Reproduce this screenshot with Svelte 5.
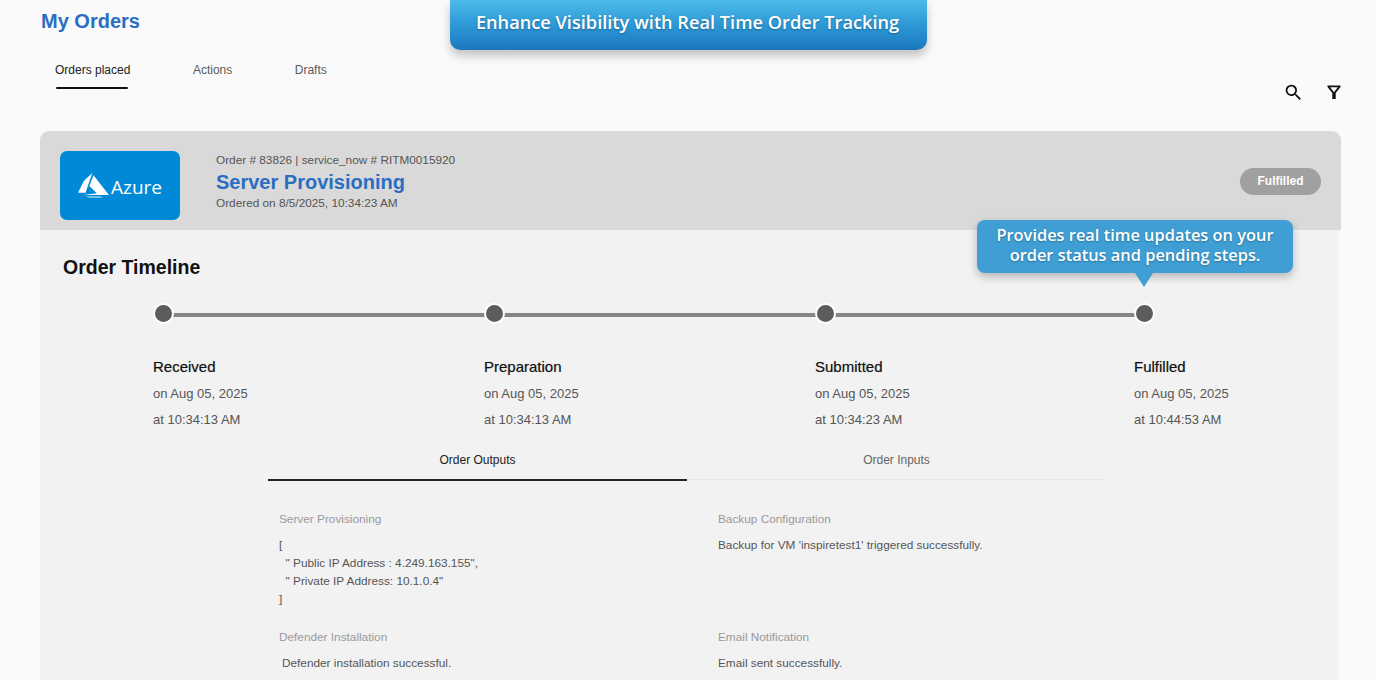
<script>
  const tabs = [
    { label: 'Orders placed', active: true },
    { label: 'Actions', active: false },
    { label: 'Drafts', active: false }
  ];

  const steps = [
    { name: 'Received', date: 'on Aug 05, 2025', time: 'at 10:34:13 AM' },
    { name: 'Preparation', date: 'on Aug 05, 2025', time: 'at 10:34:13 AM' },
    { name: 'Submitted', date: 'on Aug 05, 2025', time: 'at 10:34:23 AM' },
    { name: 'Fulfilled', date: 'on Aug 05, 2025', time: 'at 10:44:53 AM' }
  ];
</script>

<div class="page">
  <div class="banner">Enhance Visibility with Real Time Order Tracking</div>

  <h1>My Orders</h1>

  <div class="toolbar">
    <nav class="tabs">
      {#each tabs as tab}
        <span class="tab" class:active={tab.active}>{tab.label}</span>
      {/each}
    </nav>
    <div class="tools">
      <svg class="search" viewBox="0 0 24 24" aria-hidden="true">
        <path d="M15.5 14h-.79l-.28-.27A6.47 6.47 0 0 0 16 9.5 6.5 6.5 0 1 0 9.5 16c1.61 0 3.09-.59 4.23-1.57l.27.28v.79l5 4.99L20.49 19l-4.99-5zm-6 0C7.01 14 5 11.99 5 9.5S7.01 5 9.5 5 14 7.01 14 9.5 11.99 14 9.5 14z" />
      </svg>
      <svg class="filter" viewBox="0 0 24 24" aria-hidden="true">
        <path d="M5.500 5.500h13V7L13.700 13v6h-3.400v-6L5.500 7V5.500zM8.200 7.200l3.400 4.600h.8l3.400-4.600H8.200z" fill-rule="evenodd" />
      </svg>
    </div>
  </div>

  <section class="card">
    <header class="card-head">
      <div class="logo">
        <svg viewBox="0 0 30 25" aria-hidden="true">
          <path d="M13.800 0 5.800 7.500 0 19h7.300L13.800 0z" />
          <path d="M15 2 11 12.500l7.200 7L5.500 21.200H30L15 2z" />
          <path d="M7 22.400h15l2 1.400H11z" opacity="0.6" />
        </svg>
        <span>Azure</span>
      </div>
      <div class="head-text">
        <div class="meta">Order # 83826 | service_now # RITM0015920</div>
        <div class="title">Server Provisioning</div>
        <div class="meta">Ordered on 8/5/2025, 10:34:23 AM</div>
      </div>
      <span class="status">Fulfilled</span>
    </header>

    <div class="card-body">
      <div class="callout">Provides real time updates on your<br />order status and pending steps.</div>

      <h2>Order Timeline</h2>

      <div class="timeline">
        {#each steps as step}
          <div class="step">
            <div class="track"><span class="dot"></span></div>
            <div class="step-name">{step.name}</div>
            <div class="step-line">{step.date}</div>
            <div class="step-line">{step.time}</div>
          </div>
        {/each}
      </div>

      <div class="detail">
        <div class="detail-tabs">
          <span class="detail-tab active">Order Outputs</span>
          <span class="detail-tab">Order Inputs</span>
        </div>
        <div class="outputs">
          <div class="output first">
            <div class="output-label">Server Provisioning</div>
            <pre class="output-value">[
  " Public IP Address : 4.249.163.155",
  " Private IP Address: 10.1.0.4"
]</pre>
          </div>
          <div class="output first">
            <div class="output-label">Backup Configuration</div>
            <div class="output-value">Backup for VM 'inspiretest1' triggered successfully.</div>
          </div>
          <div class="output">
            <div class="output-label">Defender Installation</div>
            <div class="output-value indent">Defender installation successful.</div>
          </div>
          <div class="output">
            <div class="output-label">Email Notification</div>
            <div class="output-value">Email sent successfully.</div>
          </div>
        </div>
      </div>
    </div>
  </section>
</div>

<style>
  :global(body) {
    margin: 0;
    background: #fafafa;
    overflow: hidden;
  }

  .page {
    position: relative;
    height: 680px;
    overflow: hidden;
    box-sizing: border-box;
    padding: 10px 35px 0 40px;
    font-family: "Liberation Sans", Arial, sans-serif;
    color: #555;
  }

  .banner {
    position: absolute;
    top: 0;
    left: 450px;
    width: 477px;
    height: 50px;
    box-sizing: border-box;
    padding: 10px 2px 0 0;
    border-radius: 0 0 10px 10px;
    background: linear-gradient(180deg, #4bbbe8 0%, #2d98d6 50%, #1b78bf 100%);
    box-shadow: 0 6px 10px rgba(0, 0, 0, 0.22);
    color: #fff;
    font-family: "Open Sans", sans-serif;
    font-size: 18.200px;
    font-weight: 600;
    line-height: 25px;
    text-align: center;
    text-shadow: 0 1px 2px rgba(0, 0, 0, 0.3);
    white-space: nowrap;
  }

  h1 {
    margin: 0 0 0 1px;
    color: #2a6ec2;
    font-size: 20px;
    font-weight: 700;
    line-height: 23px;
  }

  .toolbar {
    display: flex;
    justify-content: space-between;
    height: 98px;
  }

  .tabs {
    display: flex;
    gap: 62.500px;
    padding: 30px 0 0 15px;
  }

  .tab {
    position: relative;
    height: 15px;
    color: #5a5a5a;
    font-size: 12px;
    line-height: 15px;
  }

  .tab.active {
    color: #222;
  }

  .tab.active::after {
    content: "";
    position: absolute;
    left: 1px;
    right: 2px;
    top: 24px;
    height: 2px;
    border-radius: 2px;
    background: #111;
  }

  .tools {
    display: flex;
    gap: 18px;
    margin-right: -5px;
    padding-top: 47px;
  }

  .tools svg {
    fill: #111;
  }

  .search {
    width: 21px;
    height: 21px;
    margin-top: 2px;
  }

  .filter {
    width: 24px;
    height: 24px;
  }

  .card-head {
    display: flex;
    align-items: center;
    height: 99px;
    box-sizing: border-box;
    padding: 0 20px;
    border-radius: 9px 9px 0 0;
    background: #d9d9d9;
  }

  .logo {
    display: flex;
    align-items: center;
    justify-content: center;
    gap: 2px;
    width: 120px;
    height: 69px;
    margin-top: 10px;
    border-radius: 7px;
    background: #0089d6;
    color: #fff;
    font-family: "Open Sans", sans-serif;
    font-size: 19px;
  }

  .logo svg {
    width: 31px;
    height: 26px;
    fill: #fff;
  }

  .logo span {
    padding-top: 2px;
  }

  .head-text {
    flex: 1;
    margin: 2px 0 0 36px;
  }

  .meta {
    font-size: 11.800px;
    line-height: 14px;
  }

  .title {
    margin: 4px 0 2px;
    color: #2a6ec2;
    font-size: 20px;
    font-weight: 700;
    line-height: 23px;
  }

  .status {
    width: 81px;
    height: 27px;
    margin-top: 2px;
    border-radius: 14px;
    background: #a0a0a0;
    color: #fff;
    font-size: 12px;
    font-weight: 700;
    line-height: 27px;
    text-align: center;
  }

  .card-body {
    position: relative;
    height: 460px;
    margin-right: 2px;
    box-sizing: border-box;
    padding: 26px 0 0 23px;
    background: #f2f2f2;
  }

  .callout {
    position: absolute;
    top: -10px;
    left: 937px;
    width: 316px;
    height: 53px;
    box-sizing: border-box;
    padding-top: 5px;
    border-radius: 8px;
    background: #3f9fd4;
    box-shadow: 0 4px 8px rgba(0, 0, 0, 0.25);
    color: #fff;
    font-family: "Open Sans", sans-serif;
    font-size: 16.400px;
    font-weight: 600;
    line-height: 20px;
    text-align: center;
    text-shadow: 0 1px 2px rgba(0, 0, 0, 0.3);
    white-space: nowrap;
  }

  .callout::after {
    content: "";
    position: absolute;
    left: 158px;
    top: 53px;
    border-left: 9px solid transparent;
    border-right: 9px solid transparent;
    border-top: 14px solid #3f9fd4;
  }

  h2 {
    margin: 0;
    color: #111;
    font-size: 19.500px;
    font-weight: 700;
    line-height: 23px;
  }

  .timeline {
    display: flex;
    margin: 23px 0 0 90px;
  }

  .step {
    flex: 0 0 331px;
    font-size: 13px;
  }

  .step:nth-child(3) {
    flex-basis: 319px;
  }

  .track {
    position: relative;
    height: 22px;
    margin-bottom: 34px;
  }

  .track::after {
    content: "";
    position: absolute;
    left: 11px;
    right: -11px;
    top: 11px;
    height: 4px;
    background: #858585;
  }

  .step:last-child .track::after {
    display: none;
  }

  .dot {
    position: absolute;
    z-index: 1;
    left: 0;
    top: 1px;
    width: 17px;
    height: 17px;
    border: 2px solid #fff;
    border-radius: 50%;
    background: #5c5c5c;
  }

  .step-name {
    color: #111;
    font-size: 15px;
    line-height: 18px;
    margin-bottom: 5px;
    text-shadow: 0 0 1px rgba(0, 0, 0, 0.35);
  }

  .step-line {
    color: #555;
    line-height: 26px;
  }

  .detail {
    width: 838px;
    margin: 10px 0 0 205px;
  }

  .detail-tabs {
    display: flex;
    height: 36px;
    border-bottom: 1px solid #e6e6e6;
  }

  .detail-tab {
    position: relative;
    flex: 1;
    padding-top: 10px;
    color: #666;
    font-size: 12px;
    line-height: 14px;
    text-align: center;
  }

  .detail-tab.active {
    height: 26px;
    border-bottom: 2px solid #222;
    color: #222;
  }

  .outputs {
    display: grid;
    grid-template-columns: 439px 1fr;
    padding: 32px 0 0 11px;
  }

  .output.first {
    height: 118px;
  }

  .output-label {
    color: #999;
    font-size: 11.800px;
    line-height: 14px;
    margin-bottom: 10px;
  }

  .output-value {
    margin: 0;
    color: #555;
    font-family: inherit;
    font-size: 11.800px;
    line-height: 18px;
  }

  .indent {
    padding-left: 3px;
  }
</style>
